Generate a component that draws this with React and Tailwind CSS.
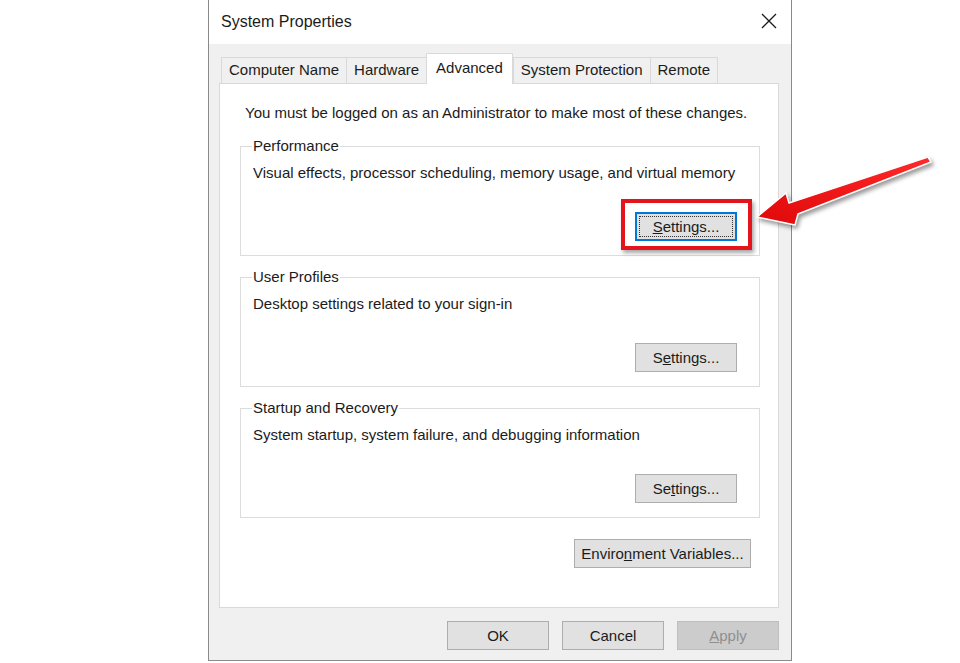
import React from 'react';

const tabs = ['Computer Name', 'Hardware', 'Advanced', 'System Protection', 'Remote'];

const WinButton = ({ children, className = '', disabled = false }) => (
  <button
    disabled={disabled}
    className={`h-[29px] border text-[15px] leading-none ${
      disabled ? 'bg-[#cccccc] border-[#bfbfbf] text-[#8f8f8f]' : 'bg-[#e1e1e1] border-[#adadad] text-[#1b1b1b]'
    } ${className}`}
  >
    {children}
  </button>
);

const Group = ({ title, desc, children }) => (
  <fieldset className="border border-[#dcdcdc] pl-[12px] pr-[22px] pb-[14px]">
    <legend className="px-[1px] -ml-[1px] leading-[18px]">{title}</legend>
    <p className="leading-[18px] mt-[9px]">{desc}</p>
    <div className="flex justify-end mt-[30px]">{children}</div>
  </fieldset>
);

export default function App() {
  return (
    <div className="relative w-[960px] h-[663px] overflow-hidden bg-white font-['Liberation_Sans',Arial,sans-serif] text-[15px] text-[#1b1b1b]">
      <div className="ml-[208px] w-[584px] h-[661px] flex flex-col border-x border-b border-[#8a8a8a] bg-[#f0f0f0]">
        {/* Title bar */}
        <div className="h-[44px] bg-white flex items-center justify-between pl-[12px] pr-[14px]">
          <span className="text-[16px]">System Properties</span>
          <svg width="16" height="16" viewBox="0 0 16 16" className="mb-[2px]">
            <path d="M1 1 L15 15 M15 1 L1 15" stroke="#1b1b1b" strokeWidth="1.3" fill="none" />
          </svg>
        </div>

        {/* Body */}
        <div className="flex-1 flex flex-col pl-[10px] pr-[12px] pt-[9px]">
          {/* Tabs */}
          <div className="flex items-end h-[30px] pl-[2px] relative z-10">
            {tabs.map((t) => {
              const active = t === 'Advanced';
              return (
                <div
                  key={t}
                  className={
                    active
                      ? 'h-[31px] -mb-[1px] bg-white border border-b-0 border-[#d9d9d9] px-[9px] pt-[5px] leading-[18px]'
                      : 'h-[26px] bg-[#f0f0f0] border border-b-0 border-[#d9d9d9] -mr-[1px] px-[7px] pt-[3px] leading-[18px]'
                  }
                >
                  {t}
                </div>
              );
            })}
          </div>

          {/* Panel */}
          <div className="h-[525px] bg-white border border-[#d9d9d9] pt-[20px] pl-[20px] pr-[18px]">
            <p className="pl-[5px] leading-[18px]">
              You must be logged on as an Administrator to make most of these changes.
            </p>
            <div className="mt-[15px] flex flex-col gap-[12px]">
              <Group title="Performance" desc="Visual effects, processor scheduling, memory usage, and virtual memory">
                <div className="relative">
                  <div className="absolute -left-[14px] -right-[15px] -top-[13px] -bottom-[9px] border-[4px] border-[#e4141c] shadow-[2px_3px_4px_rgba(0,0,0,0.35)]" />
                  <button className="relative w-[102px] h-[29px] bg-[#e1e1e1] border-2 border-[#0078d7] text-[15px] leading-none">
                    <span className="absolute inset-[2px] border border-dotted border-[#333]" />
                    <span className="relative"><u>S</u>ettings...</span>
                  </button>
                </div>
              </Group>
              <Group title="User Profiles" desc="Desktop settings related to your sign-in">
                <WinButton className="w-[102px]">
                  S<u>e</u>ttings...
                </WinButton>
              </Group>
              <Group title="Startup and Recovery" desc="System startup, system failure, and debugging information">
                <WinButton className="w-[102px]">
                  Se<u>t</u>tings...
                </WinButton>
              </Group>
            </div>
            <div className="flex justify-end mt-[21px] pr-[9px]">
              <WinButton className="w-[177px]">
                Enviro<u>n</u>ment Variables...
              </WinButton>
            </div>
          </div>

          {/* Dialog buttons */}
          <div className="flex justify-end gap-[13px] mt-[13px]">
            <WinButton className="w-[102px]">OK</WinButton>
            <WinButton className="w-[102px]">Cancel</WinButton>
            <WinButton className="w-[102px]" disabled>
              <u>A</u>pply
            </WinButton>
          </div>
        </div>
      </div>

      {/* Annotation arrow */}
      <svg
        className="absolute left-[750px] top-[150px] pointer-events-none"
        width="190"
        height="85"
        viewBox="0 0 190 85"
        style={{ filter: 'drop-shadow(2px 3px 2px rgba(0,0,0,0.4))' }}
      >
        <defs>
          <linearGradient id="arrowFill" x1="0" y1="1" x2="1" y2="0">
            <stop offset="0" stopColor="#e00808" />
            <stop offset="1" stopColor="#ff2a2a" />
          </linearGradient>
        </defs>
        <polygon
          points="7,67 36,43 39,53 178,7 181,12 48,64 45,75"
          fill="url(#arrowFill)"
          stroke="#ffffff"
          strokeWidth="1.5"
          strokeLinejoin="round"
        />
      </svg>
    </div>
  );
}
